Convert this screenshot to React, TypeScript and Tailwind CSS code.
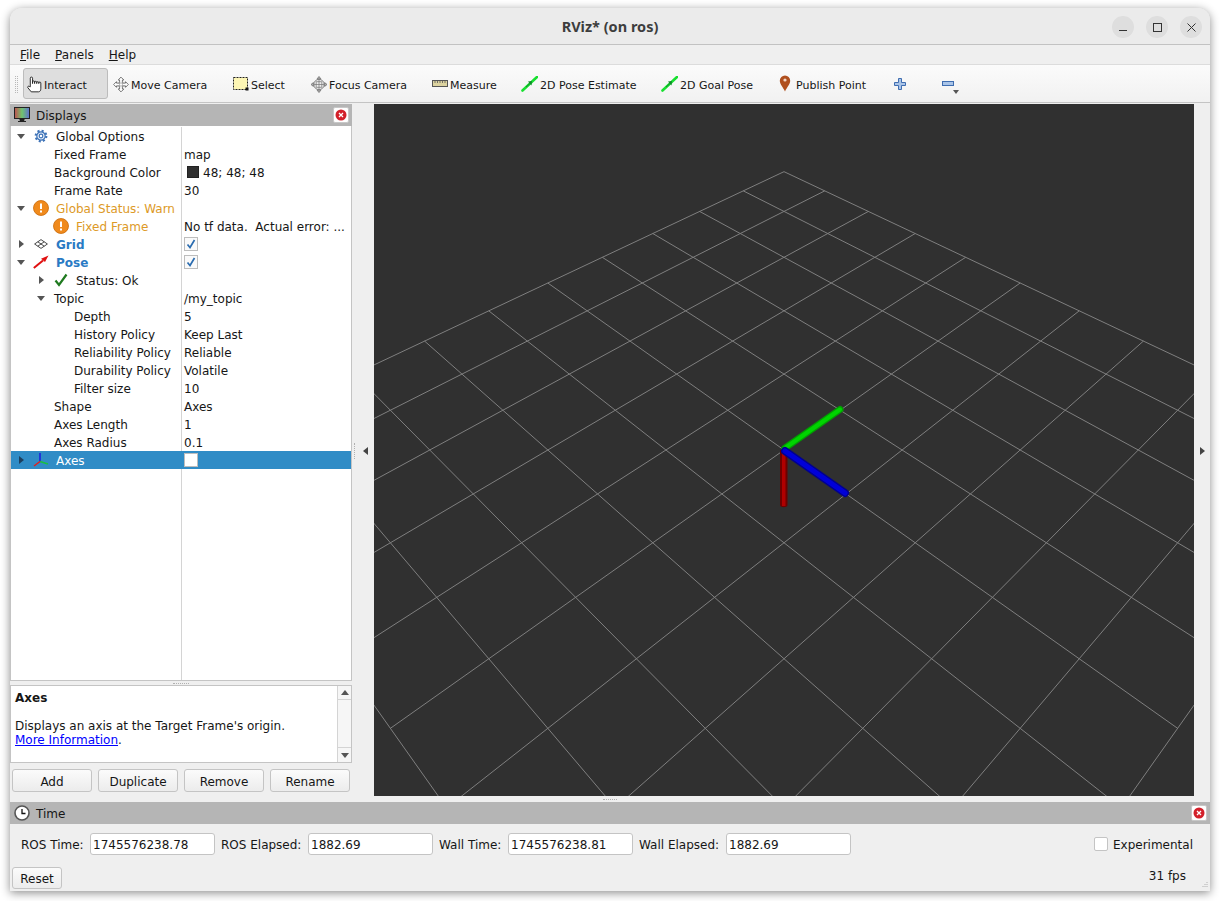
import React from 'react';

const FOCAL = 835;
const COS = Math.SQRT1_2;

// rviz orbit view: 45 degree pitch and yaw, distance 10, screen coords
function project(u: number, v: number): [number, number] {
  const s = (u + v) * COS;
  const b = (u - v) * COS;
  const z = 10 + s * COS;
  return [784 + (FOCAL * b) / z, 450 - (FOCAL * s * COS) / z];
}

function GridCanvas() {
  const lines: React.ReactElement[] = [];
  for (let i = -5; i <= 5; i++) {
    const [x1, y1] = project(i, -5);
    const [x2, y2] = project(i, 5);
    const [x3, y3] = project(-5, i);
    const [x4, y4] = project(5, i);
    lines.push(<line key={`a${i}`} x1={x1} y1={y1} x2={x2} y2={y2} stroke="#7f7f7f" strokeWidth="1" />);
    lines.push(<line key={`b${i}`} x1={x3} y1={y3} x2={x4} y2={y4} stroke="#7f7f7f" strokeWidth="1" />);
  }
  return (
    <svg viewBox="374 104 820 692" className="w-full h-full block">
      <rect x="374" y="104" width="820" height="692" fill="#303030" />
      {lines}
      <path d="M780 450h7.500v55c0 3-7.500 3-7.500 0z" fill="#6e0000" />
      <rect x="782" y="450" width="3.500" height="56" fill="#b00000" />
      <line x1="785" y1="448" x2="840" y2="409.500" stroke="#00a000" strokeWidth="7" strokeLinecap="round" />
      <line x1="785" y1="448" x2="840" y2="409.500" stroke="#00d400" strokeWidth="4" strokeLinecap="round" />
      <line x1="785" y1="451" x2="845" y2="493" stroke="#000090" strokeWidth="8" strokeLinecap="round" />
      <line x1="785" y1="451" x2="845" y2="493" stroke="#0000d8" strokeWidth="5" strokeLinecap="round" />
    </svg>
  );
}

const HandIcon = () => (
  <svg width="17" height="17" viewBox="0 0 17 17" fill="#fff" stroke="#222" strokeWidth="1">
    <path d="M3.500 11V1.800a1.200 1.200 0 0 1 2.400 0V7.500V5.800a1.100 1.100 0 0 1 2.200 0V7.500V6.200a1.100 1.100 0 0 1 2.200 0V7.500V6.600a1.100 1.100 0 0 1 2.200 0V7.500V7a1.100 1.100 0 0 1 2.200 0v5.500c0 2.200-.8 3.800-2.500 3.800H4.500L.8 11.800c-.6-1 .8-2 1.600-1.200z" />
  </svg>
);
const MoveIcon = () => (
  <svg width="17" height="17" viewBox="0 0 17 17" fill="#fff" stroke="#6a6a6a" strokeWidth="1">
    <path d="M8.500.7l3 3H10V7h3.300V5.500l3 3-3 3V10H10v3.300h1.500l-3 3-3-3H7V10H3.700v1.500l-3-3 3-3V7H7V3.700H5.500z" />
    <path d="M5 7h7M5 10h7M7 5v7M10 5v7" strokeWidth="0.7" stroke="#999" />
  </svg>
);
const SelectIcon = () => (
  <svg width="16" height="14" viewBox="0 0 16 14">
    <rect x="0.500" y="0.500" width="14" height="12" fill="#fdf6b4" stroke="#222" strokeDasharray="2 1" />
    <rect x="12.500" y="10.500" width="3" height="3" fill="#111" />
  </svg>
);
const FocusIcon = () => (
  <svg width="17" height="17" viewBox="0 0 17 17" fill="none" stroke="#7a7a7a" strokeWidth="1">
    <path d="M8.500 0l2 2.500h-4zM8.500 17l2-2.500h-4zM0 8.500l2.500 2v-4zM17 8.500l-2.500 2v-4z" fill="#bbb" />
    <circle cx="8.500" cy="8.500" r="5.500" fill="#eee" />
    <path d="M8.500 3v11M3 8.500h11M5.500 5.500v6M11.500 5.500v6M5.500 5.500h6M5.500 11.500h6" strokeWidth="0.800" />
  </svg>
);
const RulerIcon = () => (
  <svg width="16" height="8" viewBox="0 0 16 8">
    <rect x="0.500" y="0.500" width="15" height="6" fill="#dcd3a0" stroke="#555" />
    <path d="M3 1v2M5.500 1v2M8 1v2M10.500 1v2M13 1v2" stroke="#555" strokeWidth="0.800" />
  </svg>
);
const GreenArrow = () => (
  <svg width="17" height="16" viewBox="0 0 17 16" fill="none" className="shrink-0">
    <path d="M1.500 14.500L16 1" stroke="#18e030" strokeWidth="2.600" strokeLinecap="round" />
    <path d="M5 11L9.500 7" stroke="#0f8a2a" strokeWidth="1" />
    <path d="M7 5.500l4-.5-.5 4.500z" fill="#0f8a2a" />
  </svg>
);
const PinIcon = () => (
  <svg width="12" height="17" viewBox="0 0 12 17">
    <path d="M6 16.500C4 12 .8 9.500.8 5.800a5.200 5.200 0 0 1 10.400 0C11.200 9.500 8 12 6 16.500z" fill="#b0501f" />
    <circle cx="6" cy="5" r="1.600" fill="#f2d8c8" />
  </svg>
);
const PlusIcon = () => (
  <svg width="12" height="12" viewBox="0 0 12 12">
    <path d="M4.500.5h3v4h4v3h-4v4h-3v-4h-4v-3h4z" fill="#a9c4e8" stroke="#3f6db0" />
  </svg>
);
const MinusIcon = () => (
  <svg width="12" height="5" viewBox="0 0 12 5">
    <rect x="0.500" y="0.500" width="11" height="4" fill="#a9c4e8" stroke="#3f6db0" />
  </svg>
);
const MonitorIcon = () => (
  <svg width="16" height="16" viewBox="0 0 16 16">
    <defs>
      <linearGradient id="screen" x1="0" x2="1" y1="0" y2="0">
        <stop offset="0" stopColor="#c44f4f" />
        <stop offset="0.5" stopColor="#6fc46f" />
        <stop offset="1" stopColor="#5f6fd0" />
      </linearGradient>
    </defs>
    <rect x="0.500" y="0.500" width="15" height="11" fill="url(#screen)" stroke="#222" />
    <path d="M6 12h4v1.500H6zM4 14.500h8" fill="#222" stroke="#222" />
  </svg>
);
const CloseBtn = () => (
  <div className="w-[16px] h-[16px] bg-white rounded-[2px] border border-[#c8c8c8] flex items-center justify-center">
    <svg width="12" height="12" viewBox="0 0 12 12">
      <circle cx="6" cy="6" r="5.500" fill="#d3202a" />
      <path d="M4 4l4 4M8 4l-4 4" stroke="#fff" strokeWidth="1.300" />
    </svg>
  </div>
);
const GearIcon = () => (
  <svg width="16" height="16" viewBox="0 0 16 16" fill="#dfe9f6" stroke="#3f74b8" strokeWidth="1.200">
    <circle cx="8" cy="8" r="5.200" strokeWidth="2.400" strokeDasharray="2 2.080" fill="none" />
    <circle cx="8" cy="8" r="4.200" />
    <circle cx="8" cy="8" r="1.800" fill="#fff" />
  </svg>
);
const WarnIcon = () => (
  <svg width="16" height="16" viewBox="0 0 16 16">
    <circle cx="8" cy="8" r="7.500" fill="#f08a1c" stroke="#c96a08" strokeWidth="0.800" />
    <rect x="7" y="3.500" width="2" height="5.500" fill="#fff" />
    <rect x="7" y="10.500" width="2" height="2" fill="#fff" />
  </svg>
);
const GridIcon = () => (
  <svg width="14" height="10" viewBox="0 0 14 10" fill="none" stroke="#333" strokeWidth="0.900">
    <path d="M7 .6L13.400 5 7 9.400.6 5zM3.800 2.800L10.200 7.200M10.200 2.800L3.800 7.200" />
  </svg>
);
const PoseIcon = () => (
  <svg width="16" height="14" viewBox="0 0 16 14" fill="none">
    <path d="M.8 13L10 5.500" stroke="#e01010" strokeWidth="2" />
    <path d="M8 3.800L15.500.5 12 7z" fill="#e01010" />
  </svg>
);
const CheckIcon = () => (
  <svg width="14" height="14" viewBox="0 0 14 14" fill="none">
    <path d="M1.500 7.500L5 12 12.500 1.500" stroke="#1f7a1f" strokeWidth="2.200" />
  </svg>
);
const AxesIcon = () => (
  <svg width="16" height="16" viewBox="0 0 16 16" fill="none" strokeWidth="1.500">
    <path d="M7 9.500V1" stroke="#1818e0" />
    <path d="M7 9.500L15 12" stroke="#18c040" />
    <path d="M7 9.500L1 14" stroke="#e02020" />
  </svg>
);
const ClockIcon = () => (
  <svg width="16" height="16" viewBox="0 0 16 16" fill="#fff" stroke="#555" strokeWidth="1.600">
    <circle cx="8" cy="8" r="7" />
    <path d="M8 4v4.500h3.500" fill="none" stroke="#111" strokeWidth="1.300" />
  </svg>
);

const Arrow = ({ open, light }: { open?: boolean; light?: boolean }) => (
  <div className="w-[20px] h-[18px] shrink-0 flex items-center justify-center">
    {open ? (
      <svg width="8" height="5" viewBox="0 0 8 5"><path d="M0 0h8L4 5z" fill="#555" /></svg>
    ) : (
      <svg width="5" height="8" viewBox="0 0 5 8"><path d="M0 0l5 4-5 4z" fill={light ? '#1c3f5f' : '#555'} /></svg>
    )}
  </div>
);

const Box = ({ checked, white }: { checked?: boolean; white?: boolean }) => (
  <div className={`w-[14px] h-[14px] border border-[#bdbdbd] flex items-center justify-center ${white ? 'bg-white' : 'bg-[#fafafa]'}`}>
    {checked && (
      <svg width="10" height="10" viewBox="0 0 10 10" fill="none"><path d="M1.500 5.500L4 8.500 8.500 1" stroke="#2a6cb0" strokeWidth="1.700" /></svg>
    )}
  </div>
);

const Swatch = () => <div className="w-[12px] h-[12px] ml-[3px] mr-[4px] bg-[#303030] border border-[#222]" />;

type Row = {
  name: string;
  pad: string;
  open?: boolean;
  closed?: boolean;
  icon?: React.ReactNode;
  gap?: string;
  color?: string;
  value?: React.ReactNode;
};

const Val = ({ children }: { children: React.ReactNode }) => <span className="pt-[2px]">{children}</span>;

const rows: Row[] = [
  { name: 'Global Options', pad: '', open: true, icon: <GearIcon />, gap: 'ml-[5px]' },
  { name: 'Fixed Frame', pad: 'pl-[43px]', value: <Val>map</Val> },
  { name: 'Background Color', pad: 'pl-[43px]', value: <><Swatch /><Val>48; 48; 48</Val></> },
  { name: 'Frame Rate', pad: 'pl-[43px]', value: <Val>30</Val> },
  { name: 'Global Status: Warn', pad: '', open: true, icon: <WarnIcon />, gap: 'ml-[5px]', color: 'text-[#dd9a27]' },
  { name: 'Fixed Frame', pad: 'pl-[40px]', icon: <WarnIcon />, gap: 'ml-[5px]', color: 'text-[#dd9a27]', value: <Val>No tf data.  Actual error: ...</Val> },
  { name: 'Grid', pad: '', closed: true, icon: <GridIcon />, gap: 'ml-[5px]', color: 'text-[#2a7ac4] font-bold', value: <Box checked /> },
  { name: 'Pose', pad: '', open: true, icon: <PoseIcon />, gap: 'ml-[5px]', color: 'text-[#2a7ac4] font-bold', value: <Box checked /> },
  { name: 'Status: Ok', pad: 'pl-[20px]', closed: true, icon: <CheckIcon />, gap: 'ml-[5px]' },
  { name: 'Topic', pad: 'pl-[20px]', open: true, gap: 'ml-[3px]', value: <Val>/my_topic</Val> },
  { name: 'Depth', pad: 'pl-[63px]', value: <Val>5</Val> },
  { name: 'History Policy', pad: 'pl-[63px]', value: <Val>Keep Last</Val> },
  { name: 'Reliability Policy', pad: 'pl-[63px]', value: <Val>Reliable</Val> },
  { name: 'Durability Policy', pad: 'pl-[63px]', value: <Val>Volatile</Val> },
  { name: 'Filter size', pad: 'pl-[63px]', value: <Val>10</Val> },
  { name: 'Shape', pad: 'pl-[43px]', value: <Val>Axes</Val> },
  { name: 'Axes Length', pad: 'pl-[43px]', value: <Val>1</Val> },
  { name: 'Axes Radius', pad: 'pl-[43px]', value: <Val>0.1</Val> },
];

function TreeRow({ row, selected }: { row: Row; selected?: boolean }) {
  return (
    <div className={`flex h-[18px] ${selected ? 'bg-[#308cc6] text-white' : ''}`}>
      <div className={`w-[170px] shrink-0 flex items-center whitespace-nowrap overflow-hidden ${row.pad}`}>
        {row.open && <Arrow open />}
        {row.closed && <Arrow light={selected} />}
        {row.icon && <div className="w-[20px] h-[18px] shrink-0 flex items-center justify-center">{row.icon}</div>}
        <span className={`pt-[2px] ${row.gap ?? ''} ${row.color ?? ''}`}>{row.name}</span>
      </div>
      <div className={`flex-1 flex items-center pl-[2px] whitespace-pre border-l ${selected ? 'border-[#308cc6]' : 'border-[#d4d4d4]'}`}>
        {row.value}
      </div>
    </div>
  );
}

const toolItems = [
  { label: 'Interact', icon: <HandIcon />, w: 'w-[85px]', gap: 'gap-[1px]' },
  { label: 'Move Camera', icon: <MoveIcon />, w: 'w-[120px]', gap: 'gap-[2px]' },
  { label: 'Select', icon: <SelectIcon />, w: 'w-[78px]', gap: 'gap-[2px]' },
  { label: 'Focus Camera', icon: <FocusIcon />, w: 'w-[121px]', gap: 'gap-[2px]' },
  { label: 'Measure', icon: <RulerIcon />, w: 'w-[89px]', gap: 'gap-[2px]' },
  { label: '2D Pose Estimate', icon: <GreenArrow />, w: 'w-[140px]', gap: 'gap-[3px]' },
  { label: '2D Goal Pose', icon: <GreenArrow />, w: 'w-[119px]', gap: 'gap-[3px]' },
];

const ActionBtn = ({ label, w }: { label: string; w: string }) => (
  <div className={`${w} h-[23px] pt-[2px] flex items-center justify-center rounded-[3px] border border-[#c4c4c4] bg-gradient-to-b from-[#fbfbfb] to-[#ececec]`}>
    {label}
  </div>
);

const TimeField = ({ label, value, ml, w }: { label: string; value: string; ml: string; w: string }) => (
  <div className={`flex items-center ${ml}`}>
    <span className={`whitespace-nowrap pt-[2px] ${w}`}>{label}</span>
    <div className="w-[125px] h-[22px] bg-white border border-[#c4c4c4] rounded-[3px] flex items-center pl-[2px] pt-[2px]">{value}</div>
  </div>
);

export default function App() {
  return (
    <div className="w-[1220px] h-[901px] bg-white pl-[10px] pt-[8px] overflow-hidden font-['DejaVu_Sans',sans-serif] text-[12px] text-[#161616]">
      <div className="w-[1200px] h-[883px] flex flex-col bg-[#efefef] rounded-t-[12px] shadow-[0_2px_10px_rgba(0,0,0,0.45)] overflow-hidden relative">
        {/* Title bar */}
        <div className="h-[37px] shrink-0 flex items-center bg-[#ebebeb] border-b border-[#c2c2c2] relative">
          <div className="flex-1 text-center pt-[2px] font-['Noto_Sans',sans-serif] font-bold text-[14.500px] text-[#3d3d3d]">RViz* (on ros)</div>
          <div className="absolute right-[8px] top-[8px] flex gap-[12px]">
            {[0, 1, 2].map((i) => (
              <div key={i} className="w-[22px] h-[22px] rounded-full bg-[#dedede] flex items-center justify-center">
                {i === 0 && <svg width="8" height="8" viewBox="0 0 8 8"><path d="M0 7.500h8" stroke="#333" strokeWidth="1" /></svg>}
                {i === 1 && <svg width="9" height="9" viewBox="0 0 9 9"><rect x="0.500" y="0.500" width="8" height="8" fill="none" stroke="#333" /></svg>}
                {i === 2 && <svg width="9" height="9" viewBox="0 0 9 9"><path d="M.5.5l8 8M8.500.5l-8 8" stroke="#333" /></svg>}
              </div>
            ))}
          </div>
        </div>

        {/* Menu bar */}
        <div className="h-[20px] shrink-0 flex items-center pl-[10px] pt-[1px] gap-[15px] bg-[#efefef] border-b border-[#dcdcdc]">
          <span><u>F</u>ile</span>
          <span><u>P</u>anels</span>
          <span><u>H</u>elp</span>
        </div>

        {/* Toolbar */}
        <div className="h-[38px] shrink-0 flex items-center pl-[5px] bg-gradient-to-b from-[#fbfbfb] to-[#f1f1f1] border-b border-[#c4c4c4] text-[11px] relative">
          <div className="w-[3px] h-[17px] mr-[5px] mt-[2px] border-x border-dotted border-[#b8b8b8] shrink-0" />
          {toolItems.map((t, i) => (
            <div
              key={t.label}
              className={`${t.w} ${t.gap} h-[31px] shrink-0 flex items-center pl-[3px] whitespace-nowrap ${i === 0 ? 'bg-[#dedede] border border-[#bcbcbc] rounded-[3px] mr-[2px] pl-[2px]' : ''}`}
            >
              <div className="w-[16px] flex justify-center shrink-0 pt-[1px]">{t.icon}</div>
              <span className="pt-[5px]">{t.label}</span>
            </div>
          ))}
          <div className="w-[111px] h-[31px] shrink-0 flex items-center whitespace-nowrap pl-[2px]">
            <PinIcon />
            <span className="ml-[5px] pt-[5px]">Publish Point</span>
          </div>
          <div className="w-[24px] shrink-0 flex justify-center pt-[1px]"><PlusIcon /></div>
          <div className="w-[24px] ml-[24px] shrink-0 flex justify-center relative -mt-[1px]">
            <MinusIcon />
            <svg width="6" height="4" viewBox="0 0 6 4" className="absolute left-[17px] top-[9px]"><path d="M0 0h6L3 4z" fill="#555" /></svg>
          </div>
        </div>

        {/* Middle */}
        <div className="flex-1 min-h-0 flex">
          {/* Displays dock */}
          <div className="w-[342px] shrink-0 flex flex-col pt-[1px]">
            <div className="h-[22px] shrink-0 flex items-center bg-[#b5b5b5] pl-[4px] pr-[3px]">
              <MonitorIcon />
              <span className="ml-[6px] flex-1 pt-[2px]">Displays</span>
              <CloseBtn />
            </div>
            <div className="flex-1 min-h-0 flex flex-col bg-white border border-t-0 border-[#c4c4c4] pt-[1px]">
              {rows.map((r, i) => <TreeRow key={i} row={r} />)}
              <TreeRow selected row={{ name: 'Axes', pad: '', closed: true, icon: <AxesIcon />, gap: 'ml-[5px]', value: <Box white /> }} />
              <div className="flex-1 flex">
                <div className="w-[171px] shrink-0 border-r border-[#d4d4d4]" />
              </div>
            </div>
            <div className="h-[4px] shrink-0 flex items-center justify-center">
              <div className="w-[16px] border-t border-dotted border-[#b0b0b0]" />
            </div>
            {/* Description */}
            <div className="h-[78px] shrink-0 flex bg-white border border-[#c4c4c4] text-[12px] leading-[14px]">
              <div className="flex-1 pl-[4px] pt-[5px]">
                <div className="font-bold">Axes</div>
                <div className="mt-[14px]">Displays an axis at the Target Frame&apos;s origin.</div>
                <div><span className="text-[#0000ff] underline">More Information</span>.</div>
              </div>
              <div className="w-[14px] flex flex-col border-l border-[#d4d4d4] bg-[#f6f6f6]">
                <div className="h-[14px] flex items-center justify-center border-b border-[#d4d4d4]">
                  <svg width="8" height="5" viewBox="0 0 8 5"><path d="M4 0l4 5H0z" fill="#555" /></svg>
                </div>
                <div className="flex-1" />
                <div className="h-[15px] flex items-center justify-center border-t border-[#d4d4d4]">
                  <svg width="8" height="5" viewBox="0 0 8 5"><path d="M0 0h8L4 5z" fill="#555" /></svg>
                </div>
              </div>
            </div>
            {/* Buttons */}
            <div className="flex gap-[6px] pl-[2px] mt-[6px] mb-[10px] shrink-0">
              <ActionBtn label="Add" w="w-[80px]" />
              <ActionBtn label="Duplicate" w="w-[80px]" />
              <ActionBtn label="Remove" w="w-[80px]" />
              <ActionBtn label="Rename" w="w-[80px]" />
            </div>
          </div>

          {/* Splitter */}
          <div className="w-[22px] shrink-0 flex items-center pl-[2px] gap-[7px] pb-[4px]">
            <div className="h-[16px] w-[2px] border-l border-dotted border-[#b0b0b0]" />
            <svg width="5" height="8" viewBox="0 0 5 8"><path d="M5 0L0 4l5 4z" fill="#444" /></svg>
          </div>

          {/* 3D view */}
          <div className="w-[820px] shrink-0 flex flex-col pt-[1px]">
            <div className="h-[692px] shrink-0"><GridCanvas /></div>
            <div className="flex-1 flex items-center justify-center pr-[348px]">
              <div className="w-[14px] border-t border-dotted border-[#b0b0b0]" />
            </div>
          </div>

          <div className="flex-1 flex items-center justify-center pb-[4px]">
            <svg width="5" height="8" viewBox="0 0 5 8"><path d="M0 0l5 4-5 4z" fill="#444" /></svg>
          </div>
        </div>

        {/* Time dock */}
        <div className="h-[89px] shrink-0 flex flex-col">
          <div className="h-[22px] shrink-0 flex items-center bg-[#b5b5b5] pl-[4px] pr-[3px]">
            <ClockIcon />
            <span className="ml-[6px] flex-1 pt-[2px]">Time</span>
            <CloseBtn />
          </div>
          <div className="flex items-center mt-[9px] pl-[11px]">
            <TimeField label="ROS Time:" value="1745576238.78" ml="" w="w-[69px]" />
            <TimeField label="ROS Elapsed:" value="1882.69" ml="ml-[6px]" w="w-[87px]" />
            <TimeField label="Wall Time:" value="1745576238.81" ml="ml-[6px]" w="w-[69px]" />
            <TimeField label="Wall Elapsed:" value="1882.69" ml="ml-[6px]" w="w-[87px]" />
            <div className="ml-auto mr-[17px] flex items-center">
              <div className="w-[14px] h-[14px] bg-white border border-[#c4c4c4] rounded-[2px] mr-[5px]" />
              <span className="pt-[2px]">Experimental</span>
            </div>
          </div>
          <div className="flex items-center justify-between mt-[12px] pl-[2px] pr-[24px]">
            <div className="w-[50px] h-[22px] pt-[2px] flex items-center justify-center bg-gradient-to-b from-[#fbfbfb] to-[#ececec] border border-[#c4c4c4] rounded-[3px]">Reset</div>
            <span className="-mt-[5px]">31 fps</span>
          </div>
        </div>

        {/* resize grip */}
        <svg width="8" height="8" viewBox="0 0 8 8" className="absolute right-[2px] bottom-[2px]">
          <path d="M7 1v1M5 3v1M7 3v1M3 5v1M5 5v1M7 5v1" stroke="#b0b0b0" />
        </svg>
      </div>
    </div>
  );
}
